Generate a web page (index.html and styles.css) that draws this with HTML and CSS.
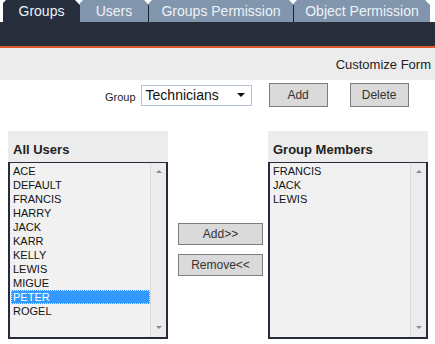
FILE: index.html
```html
<!DOCTYPE html>
<html>
  <head>
    <meta charset="UTF-8" />
    <title>Groups</title>
    <link rel="stylesheet" href="styles.css">
  </head>
  <body>
    <!-- Top tab strip -->
    <div class="tabs">
      <div class="tab tab-active tab-groups">Groups</div>
      <div class="tab tab-users">Users</div>
      <div class="tab tab-gperm">Groups Permission</div>
      <div class="tab tab-operm">Object Permission</div>
    </div>
    <div class="band"></div>
    <div class="toolbar">Customize Form</div>

    <!-- Group picker row -->
    <div class="group-row">
      <span class="group-label">Group</span>
      <div class="select-box">
        <span>Technicians</span>
        <span class="caret"></span>
      </div>
      <button class="btn btn-add">Add</button>
      <button class="btn btn-delete">Delete</button>
    </div>

    <!-- Two lists with move buttons -->
    <div class="lists">
      <div class="list-col">
        <div class="list-title">All Users</div>
        <div class="listbox">
          <div class="items">
            <div class="item">ACE</div>
            <div class="item">DEFAULT</div>
            <div class="item">FRANCIS</div>
            <div class="item">HARRY</div>
            <div class="item">JACK</div>
            <div class="item">KARR</div>
            <div class="item">KELLY</div>
            <div class="item">LEWIS</div>
            <div class="item">MIGUE</div>
            <div class="item selected">PETER</div>
            <div class="item">ROGEL</div>
          </div>
          <div class="scroll">
            <span class="arrow-up"></span>
            <span class="arrow-down"></span>
          </div>
        </div>
      </div>

      <div class="move-col">
        <button class="btn btn-move">Add&gt;&gt;</button>
        <button class="btn btn-move">Remove&lt;&lt;</button>
      </div>

      <div class="list-col">
        <div class="list-title">Group Members</div>
        <div class="listbox">
          <div class="items">
            <div class="item">FRANCIS</div>
            <div class="item">JACK</div>
            <div class="item">LEWIS</div>
          </div>
          <div class="scroll">
            <span class="arrow-up"></span>
            <span class="arrow-down"></span>
          </div>
        </div>
      </div>
    </div>
  </body>
</html>
```

FILE: styles.css
```css
body {
  margin: 0;
  font-family: "Liberation Sans", Arial, sans-serif;
  background: #fff;
  color: #222;
  width: 435px;
  height: 344px;
  overflow: hidden;
}

/* Tabs */
.tabs {
  display: flex;
  height: 22px;
  padding-left: 3px;
}
.tab {
  height: 22px;
  line-height: 23px;
  font-size: 14px;
  color: #edf2f7;
  text-align: center;
  background: #8196ad;
  clip-path: polygon(0 3px, 3px 0, calc(100% - 5px) 0, 100% 5px, 100% 100%, 0 100%);
}
.tab-active {
  background: #272e3d;
}
.tab-groups { width: 77px; }
.tab-users {
  width: 68px;
  border-right: 1px solid #1c2230;
}
.tab-gperm {
  width: 144px;
  border-right: 1px solid #1c2230;
}
.tab-operm { width: 136px; }

.band {
  height: 24px;
  background: #272d3b;
  border-bottom: 2px solid #de5a2c;
}
.toolbar {
  height: 32px;
  line-height: 34px;
  background: #ececec;
  text-align: right;
  padding-right: 4px;
  font-size: 13px;
  color: #222;
}

/* Group row */
.group-row {
  display: flex;
  align-items: center;
  height: 28px;
  padding-left: 105px;
  margin-top: 1px;
}
.group-label {
  font-size: 11px;
  margin-right: 5px;
  padding-top: 3px;
}
.select-box {
  border: 1px solid #b5c4d4;
  background: #fff;
  display: flex;
  align-items: center;
  justify-content: space-between;
  padding: 0 6px 0 4px;
  box-sizing: border-box;
  width: 111px;
  height: 21px;
  font-size: 14px;
  color: #111;
}
.caret {
  width: 0;
  height: 0;
  border-left: 4px solid transparent;
  border-right: 4px solid transparent;
  border-top: 4px solid #111;
}
.btn {
  font-family: "Liberation Sans", Arial, sans-serif;
  font-size: 12px;
  color: #333;
  background: #dadada;
  border: 1px solid #7d7d7d;
  padding: 0;
  cursor: pointer;
}
.btn-add {
  width: 59px;
  height: 24px;
  margin-left: 17px;
}
.btn-delete {
  width: 59px;
  height: 24px;
  margin-left: 22px;
}

/* Lists */
.lists {
  display: flex;
  padding-left: 8px;
  margin-top: 22px;
}
.list-col {
  width: 160px;
}
.list-title {
  background: #ececec;
  font-size: 13px;
  font-weight: bold;
  color: #222;
  height: 31px;
  line-height: 38px;
  padding-left: 5px;
}
.listbox {
  height: 174px;
  border: 2px solid #262c3a;
  border-top-width: 1px;
  background: #f1f1f1;
  display: flex;
}
.items {
  flex: 1;
  padding: 1px 0 0 1px;
}
.item {
  height: 14px;
  line-height: 14px;
  font-size: 11px;
  color: #111;
  padding-left: 2px;
}
.selected {
  background: #3399ff;
  color: #fff;
  outline: 1px dotted #cfe6ff;
  outline-offset: -1px;
}
.scroll {
  width: 15px;
  background: #ececec;
  border-left: 1px solid #dcdcdc;
  display: flex;
  flex-direction: column;
  justify-content: space-between;
  align-items: center;
  padding: 7px 0 8px;
}
.arrow-up, .arrow-down {
  width: 0;
  height: 0;
  border-left: 3px solid transparent;
  border-right: 3px solid transparent;
}
.arrow-up { border-bottom: 3px solid #8a8a8a; }
.arrow-down { border-top: 3px solid #8a8a8a; }

.move-col {
  width: 100px;
  display: flex;
  flex-direction: column;
  align-items: flex-start;
  padding-top: 92px;
  padding-left: 10px;
  box-sizing: border-box;
  gap: 9px;
}
.btn-move {
  width: 85px;
  height: 22px;
}
```
